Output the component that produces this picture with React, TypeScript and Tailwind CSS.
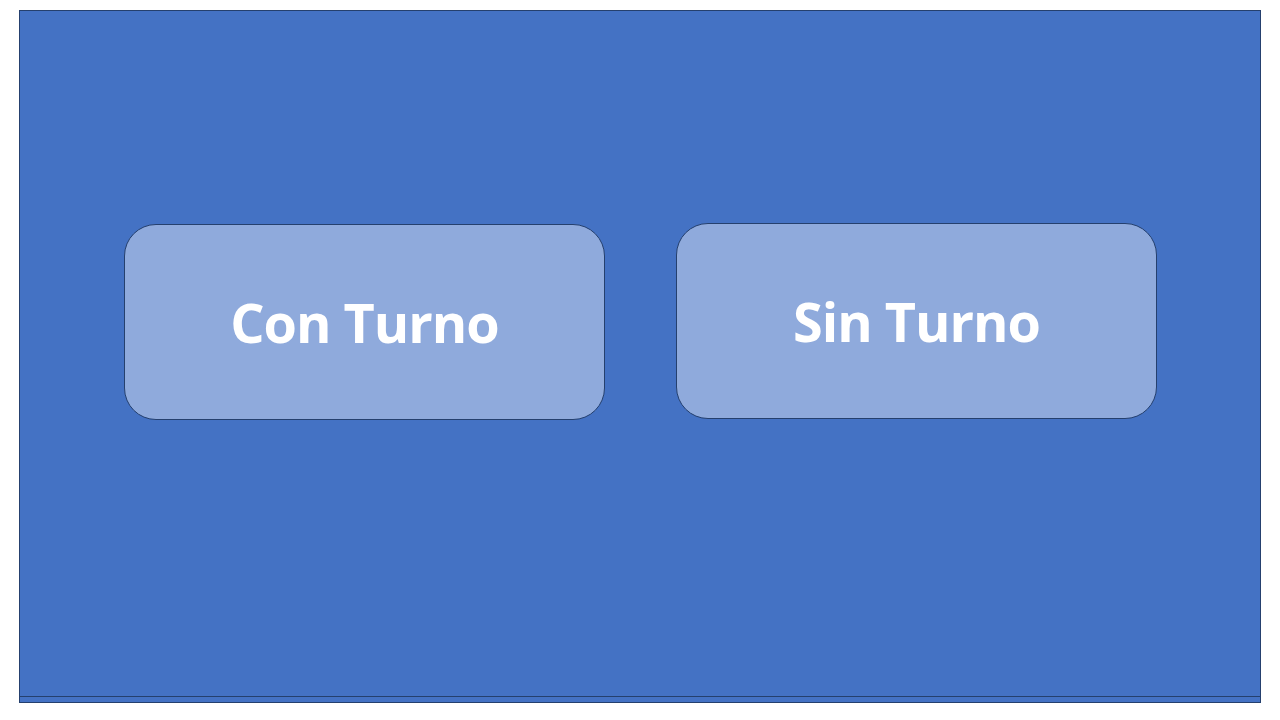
export default function App() {
  return (
    <div className="w-[1280px] h-[720px] bg-white pl-[19px] pt-[10px]" style={{ fontFamily: '"Open Sans", Lato, sans-serif' }}>
      <div className="w-[1242px] h-[693px] bg-[#4472c4] border border-[#25406e] flex flex-col">
        <div className="h-[686px] border-b border-[#25406e] flex pl-[104px] gap-[71px]">
          <button className="mt-[213px] w-[481px] h-[196px] rounded-[32px] bg-[#8faadc] border border-[#25406e] text-white font-bold text-[54px] tracking-[-1px] flex items-center justify-center">
            Con Turno
          </button>
          <button className="mt-[212px] w-[481px] h-[196px] rounded-[32px] bg-[#8faadc] border border-[#25406e] text-white font-bold text-[54px] tracking-[-1px] flex items-center justify-center">
            Sin Turno
          </button>
        </div>
      </div>
    </div>
  )
}
